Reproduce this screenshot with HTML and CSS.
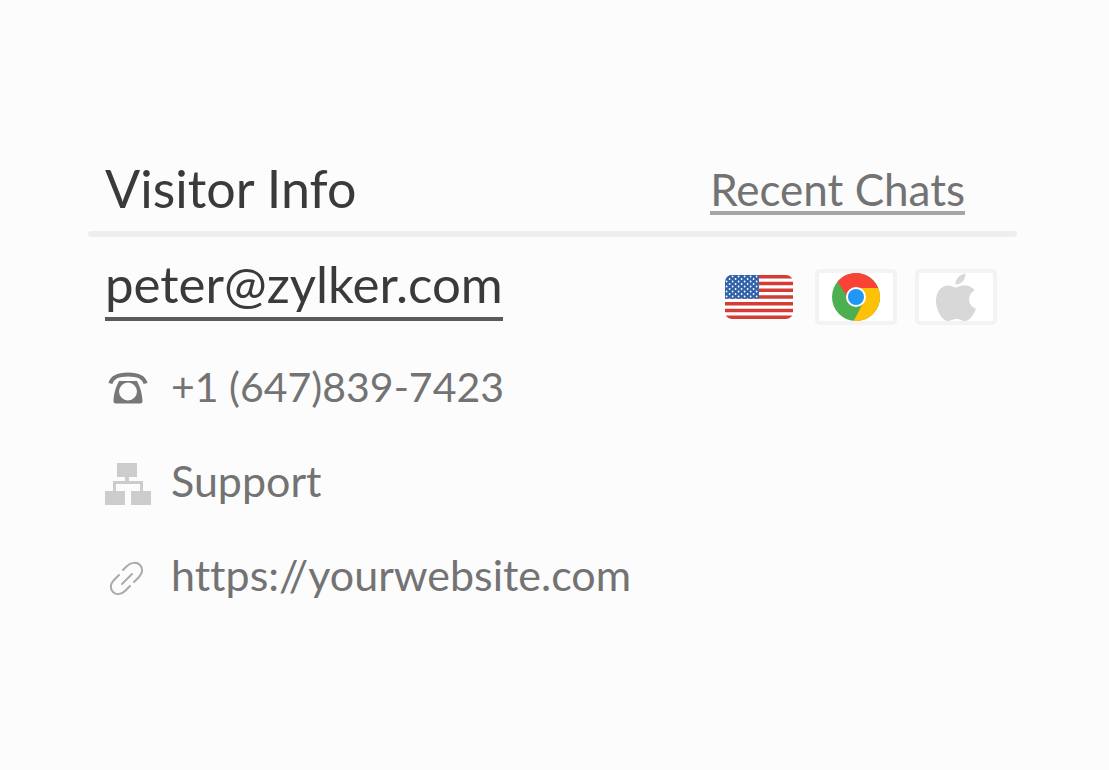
FILE: index.html
```html
<!DOCTYPE html>
<html lang="en">
<head>
    <meta charset="UTF-8">
    <meta name="viewport" content="width=device-width, initial-scale=1.0">
    <title>Visitor Info</title>
    <link rel="stylesheet" href="styles.css">
</head>
<body>
    <main class="visitor-panel">
        <header class="panel-header">
            <h1>Visitor Info</h1>
            <a class="recent-link" href="#recent">Recent Chats</a>
        </header>
        <hr class="divider">

        <section class="identity">
            <a class="email" href="mailto:peter@zylker.com">peter@zylker.com</a>
            <div class="badges">
                <svg class="flag" viewBox="0 0 68 44" role="img" aria-label="United States">
                    <defs>
                        <clipPath id="flagShape"><rect width="68" height="44" rx="7"/></clipPath>
                        <pattern id="stars" width="6" height="5" patternUnits="userSpaceOnUse">
                            <circle cx="1.6" cy="1.5" r="0.9" fill="#fff"/>
                            <circle cx="4.6" cy="4" r="0.9" fill="#fff"/>
                        </pattern>
                    </defs>
                    <g clip-path="url(#flagShape)">
                        <rect width="68" height="44" fill="#fff"/>
                        <path d="M0 1.7h68M0 8.5h68M0 15.2h68M0 22h68M0 28.8h68M0 35.5h68M0 42.3h68" stroke="#d43d35" stroke-width="3.4"/>
                        <rect width="34" height="23.7" fill="#2f62a8"/>
                        <rect width="34" height="23.7" fill="url(#stars)"/>
                    </g>
                </svg>
                <span class="badge">
                    <svg class="chrome" viewBox="0 0 48 48" role="img" aria-label="Chrome">
                        <circle cx="24" cy="24" r="24" fill="#4caf50"/>
                        <path d="M24 24L14.500 22.500L5.500 8.700A24 24 0 0 1 46.200 15H24z" fill="#f94336"/>
                        <path d="M24 15h22.200A24 24 0 0 1 21.700 47.900L31.800 28.500z" fill="#ffc107"/>
                        <circle cx="24" cy="24" r="10" fill="#fff"/>
                        <circle cx="24" cy="24" r="8" fill="#2196f3"/>
                    </svg>
                </span>
                <span class="badge">
                    <svg class="apple" viewBox="0 0 40 48" role="img" aria-label="Apple">
                        <path d="M29.500 0.500C30 6 25.500 11.500 19.500 11.500C19 6 24 1 29.500 0.500z"/>
                        <path d="M20 14.500C22.500 14.500 25 12.300 29 12.300C33 12.300 36.500 14.500 38.500 17.300C30.500 22 31.500 32.500 40 35.800C38 41 34 48 29 48C25.500 48 24.500 46 20.500 46C16.500 46 15 48 12 48C6.500 48 0 37.500 0 28C0 18 6 12.500 12 12.500C15.500 12.500 18 14.500 20 14.500z"/>
                    </svg>
                </span>
            </div>
        </section>

        <ul class="details">
            <li class="phone">
                <svg class="icon icon-phone" viewBox="0 -3 46 46" aria-hidden="true">
                    <path class="handset" d="M5.500 16.500C7 10 14 7.500 23 7.500s16 2.500 17.500 9"/>
                    <path fill-rule="evenodd" d="M14 14h18c3 6 5 11 5.500 20q0 2.500-2.500 2.500H11q-2.500 0-2.500-2.500c.5-9 2.500-14 5.500-20zM23 15.500a9 9 0 1 0 0 18a9 9 0 0 0 0-18z"/>
                </svg>
                <span>+1 (647)839-7423</span>
            </li>
            <li>
                <svg class="icon icon-team" viewBox="0 -3 46 46" aria-hidden="true">
                    <path d="M12 2h20v14h-8v4h14v10h8v14H26V30h9v-7H11v7h9v14H0V30h8V20h12v-4h-8z"/>
                </svg>
                <span>Support</span>
            </li>
            <li>
                <svg class="icon icon-link" viewBox="0 -3 46 46" aria-hidden="true">
                    <path d="M18 15l4-4c4-4 10-4 13-1s3 8-1 12l-5 5"/>
                    <path d="M14 20l-5 5c-4 4-4 9-1 12s8 3 12-1l5-5"/>
                    <path d="M17 29l10-10"/>
                </svg>
                <span>https://yourwebsite.com</span>
            </li>
        </ul>
    </main>
</body>
</html>
```
FILE: styles.css
```css
/* General Styles */
* {
    box-sizing: border-box;
}

body {
    margin: 0;
    font-family: 'Lato', sans-serif;
    font-variant-ligatures: none;
    background-color: #fcfcfc;
    color: #737373;
}

h1 {
    margin: 0;
    font-size: 52px;
    line-height: 54px;
    font-weight: 400;
    color: #3a3a3a;
}

a {
    text-decoration: none;
}

/* Panel */
.visitor-panel {
    padding: 161px 92px 40px 88px;
}

.panel-header {
    display: flex;
    justify-content: space-between;
    align-items: flex-end;
    padding: 0 52px 16px 17px;
}

.recent-link {
    font-size: 44px;
    line-height: 42px;
    padding-bottom: 1px;
    color: #737373;
    border-bottom: 4px solid #a5a5a5;
}

.divider {
    height: 6px;
    margin: 0;
    border: none;
    border-radius: 3px;
    background-color: #eeeeee;
}

/* Email and badges */
.identity {
    display: flex;
    justify-content: space-between;
    align-items: flex-start;
    padding: 22px 20px 0 17px;
}

.email {
    font-size: 51px;
    line-height: 50px;
    padding-bottom: 8px;
    color: #3a3a3a;
    border-bottom: 4px solid #5a5a5a;
}

.badges {
    display: flex;
    align-items: center;
    gap: 18px;
    padding-top: 10px;
}

.flag {
    width: 68px;
    height: 44px;
    margin-right: 4px;
}

.badge {
    display: flex;
    align-items: center;
    justify-content: center;
    width: 82px;
    height: 56px;
    background-color: #ffffff;
    border: 4px solid #f3f3f3;
    border-radius: 5px;
}

.chrome {
    width: 48px;
    height: 48px;
}

.apple {
    width: 40px;
    height: 48px;
    fill: #d8d8d8;
}

/* Contact details */
.details {
    display: flex;
    flex-direction: column;
    gap: 44px;
    margin: 0;
    padding: 37px 0 0 17px;
    list-style: none;
}

.details li {
    display: flex;
    align-items: center;
    gap: 20px;
    font-size: 43px;
    line-height: 50px;
}

.details .phone {
    font-size: 41px;
}

.icon {
    width: 46px;
    height: 46px;
    flex-shrink: 0;
    overflow: visible;
}

.icon-phone {
    fill: #777777;
}

.handset {
    fill: none;
    stroke: #777777;
    stroke-width: 4;
}

.icon-team {
    fill: #cccccc;
}

.icon-link {
    fill: none;
    stroke: #aaaaaa;
    stroke-width: 2;
    stroke-linecap: round;
}
```
